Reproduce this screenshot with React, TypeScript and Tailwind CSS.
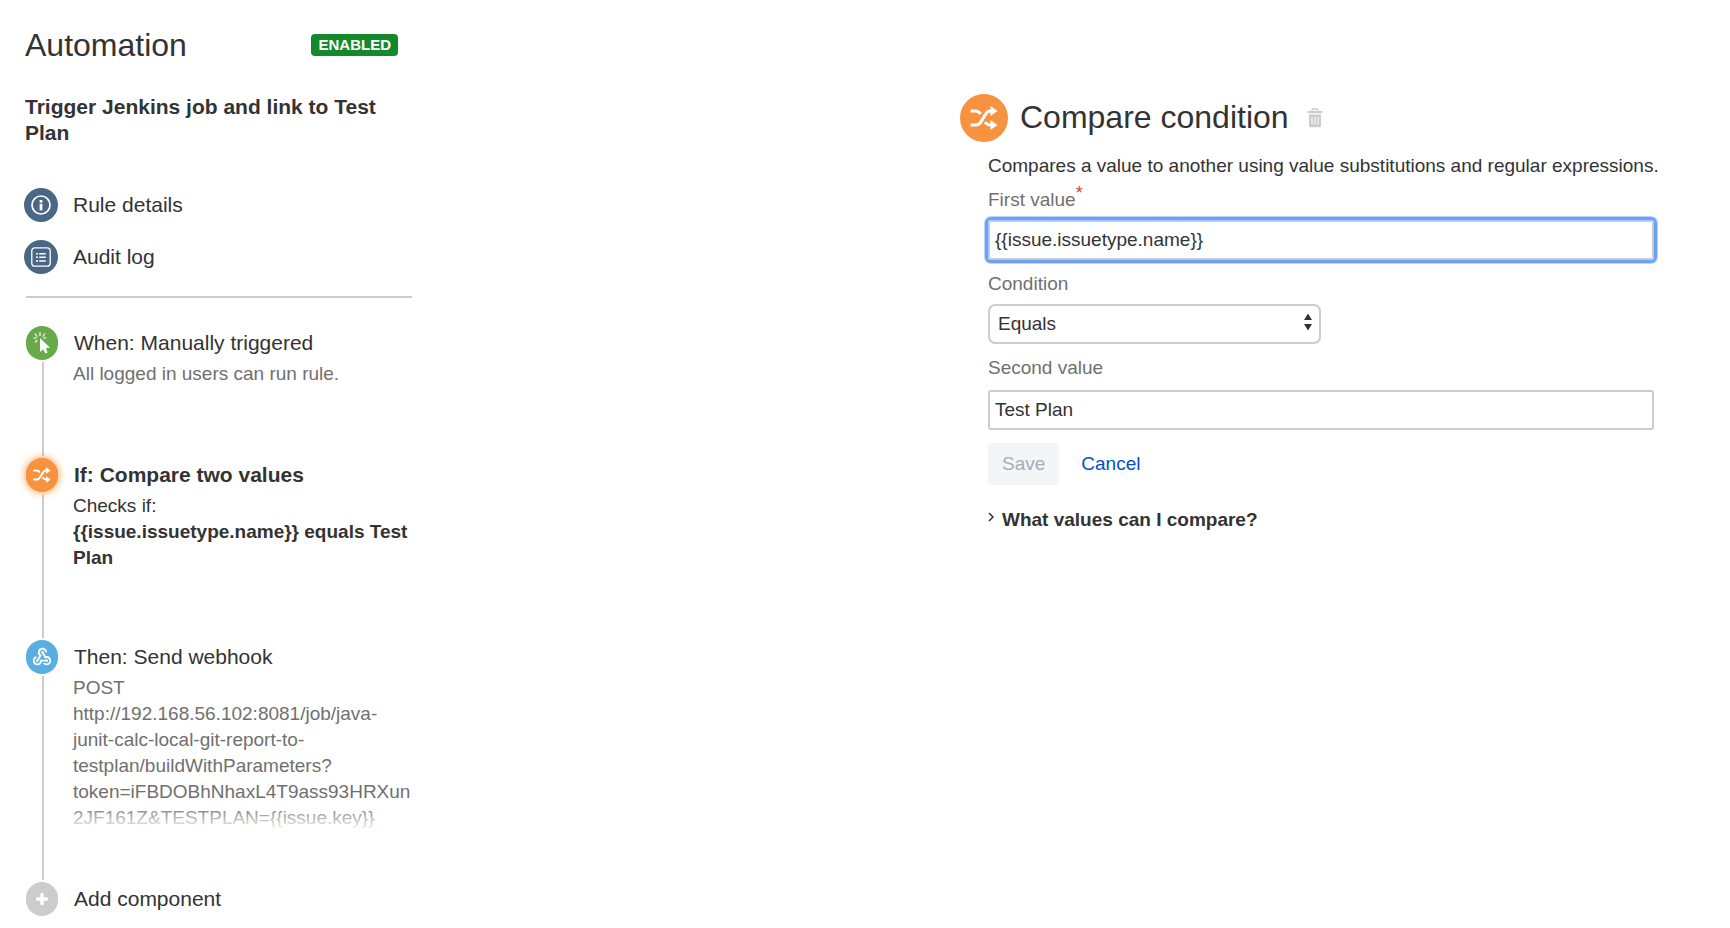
import { useState } from "react";
import type { ReactNode } from "react";
import { MdWebhook } from "react-icons/md";

const InfoIcon = () => (
  <svg viewBox="0 0 34 34" className="w-[34px] h-[34px]" aria-hidden="true">
    <circle cx="17" cy="17" r="17" fill="#4a6785" />
    <circle cx="17" cy="17" r="9" fill="none" stroke="#fff" strokeWidth="1.7" />
    <rect x="15.6" y="12" width="2.8" height="2.6" fill="#fff" />
    <rect x="15.6" y="15.8" width="2.8" height="6.6" fill="#fff" />
  </svg>
);

const LogIcon = () => (
  <svg viewBox="0 0 34 34" className="w-[34px] h-[34px]" aria-hidden="true">
    <circle cx="17" cy="17" r="17" fill="#4a6785" />
    <rect x="7.8" y="7.8" width="18.4" height="18.4" rx="3" fill="none" stroke="#fff" strokeWidth="1.3" />
    <path
      d="M12 13.7h2M15.2 13.7h6.6M12 17.3h2M15.2 17.3h6.6M12 21h2M15.2 21h6.6"
      stroke="#fff"
      strokeWidth="1.5"
    />
  </svg>
);

const ShuffleIcon = ({ className }: { className: string }) => (
  <svg viewBox="0 0 28 24" className={className} aria-hidden="true">
    <path
      d="M0.5 5H5.5c2.400 0 3.800 1 5 3M0.500 19H6c2.800 0 4-1.500 5.500-4l3.500-6c1.500-2.600 2.700-4 5-4h2M15.200 16C16.400 18 17.600 19 20 19h2"
      fill="none"
      stroke="#fff"
      strokeWidth="3.200"
    />
    <path d="M20.500 0L27.500 5l-7 5zM20.500 14L27.500 19l-7 5z" fill="#fff" />
  </svg>
);

const ClickIcon = () => (
  <svg viewBox="0 0 32 34" className="w-8 h-[34px]" aria-hidden="true">
    <path d="M14 12V26l3.200-2.800 2.100 4.400 2.400-1.200-2-4.100 4.300-.5z" fill="#fff" />
    <path
      d="M14 6v4M9 7.500l2.200 3.200M19 7.500l-2.200 3.200M7.500 12h3.200M17.200 12h3.300M9 16.300l2.200-2"
      stroke="#fff"
      strokeWidth="1.200"
      fill="none"
    />
  </svg>
);

const PlusIcon = () => (
  <svg viewBox="0 0 32 34" className="w-8 h-[34px]" aria-hidden="true">
    <path d="M16 12.500v9M11.500 17h9" stroke="#fff" strokeWidth="3.400" strokeLinecap="round" />
  </svg>
);

const TrashIcon = () => (
  <svg viewBox="0 0 16 20" className="w-4 h-5" aria-hidden="true">
    <path d="M5 3V2a1 1 0 0 1 1-1h4a1 1 0 0 1 1 1v1" fill="none" stroke="#ccc" strokeWidth="1.300" />
    <rect x="0.500" y="3" width="15" height="2.200" rx="0.600" fill="#ccc" />
    <path d="M2 6.500h12V17.500a1.800 1.800 0 0 1-1.800 1.800H3.800A1.800 1.800 0 0 1 2 17.500z" fill="#ccc" />
    <path d="M5 9v7.500M8 9v7.500M11 9v7.500" stroke="#fff" strokeWidth="1" />
  </svg>
);

type StepProps = {
  icon: ReactNode;
  color: string;
  title: string;
  selected?: boolean;
  last?: boolean;
  spacing?: string;
  children?: ReactNode;
};

const Step = ({ icon, color, title, selected, last, spacing = "", children }: StepProps) => (
  <li className="flex gap-[15px]">
    <div className="flex flex-col items-center w-8 shrink-0">
      <span
        className={`w-8 h-[34px] rounded-[16px] shrink-0 flex items-center justify-center ${color} ${
          selected ? "shadow-[0_0_8px_#f79232]" : ""
        }`}
      >
        {icon}
      </span>
      {!last && <span className="w-0.5 flex-1 my-0.5 ml-0.5 bg-[#ccc]" />}
    </div>
    <div className={`flex-1 min-w-0 ${spacing}`}>
      <button
        type="button"
        className={`block pl-px text-left text-[21px] leading-[34px] ${selected ? "font-bold" : ""}`}
      >
        {title}
      </button>
      {children}
    </div>
  </li>
);

const App = () => {
  const [firstValue, setFirstValue] = useState("{{issue.issuetype.name}}");
  const [secondValue, setSecondValue] = useState("Test Plan");
  const [condition, setCondition] = useState("Equals");

  return (
    <div className="flex bg-white pl-6 pr-[76px] text-[#333] text-[19px] leading-[26px] font-['Liberation_Sans',Arial,sans-serif]">
      {/* Rule sidebar */}
      <aside className="w-[388px] shrink-0 pt-6">
        <div className="flex items-center justify-between pl-px pr-[14px]">
          <h1 className="text-[32px] leading-[42px]">Automation</h1>
          <span className="rounded-[4px] bg-[#14892c] px-[7px] text-[15px] leading-[22px] font-bold text-white">
            ENABLED
          </span>
        </div>
        <h2 className="mt-7 pl-px text-[21px] leading-[26px] font-bold">
          Trigger Jenkins job and link to Test Plan
        </h2>

        <nav className="mt-[42px] flex flex-col gap-[18px] text-[21px] leading-[34px]">
          <a href="#details" className="flex items-center gap-[15px]">
            <InfoIcon />
            Rule details
          </a>
          <a href="#audit" className="flex items-center gap-[15px]">
            <LogIcon />
            Audit log
          </a>
        </nav>

        <hr className="mt-[22px] ml-0.5 border-0 h-0.5 bg-[#ccc]" />

        <ol className="mt-7 pl-0.5">
          <Step icon={<ClickIcon />} color="bg-[#67ab49]" title="When: Manually triggered" spacing="pb-[71px]">
            <p className="mt-px text-[#707070]">All logged in users can run rule.</p>
          </Step>
          <Step
            icon={<ShuffleIcon className="w-[18px] h-4" />}
            color="bg-[#f79240]"
            title="If: Compare two values"
            selected
            spacing="pb-[69px]"
          >
            <p className="mt-px">Checks if:</p>
            <p className="font-bold">{"{{issue.issuetype.name}} equals Test Plan"}</p>
          </Step>
          <Step
            icon={<MdWebhook className="w-[22px] h-[22px] text-white" />}
            color="bg-[#59afe1]"
            title="Then: Send webhook"
            spacing="pb-[51px]"
          >
            <div className="relative mt-px text-[#707070]">
              <p>POST</p>
              <p className="break-words">
                {"http://192.168.56.102:8081/job/java-junit-calc-local-git-report-to-testplan/buildWithParameters?token=iFBDOBhNhaxL4T9ass93HRXun2JF161Z&TESTPLAN={{issue.key}}"}
              </p>
              <div className="absolute inset-x-0 bottom-0 h-[26px] bg-gradient-to-b from-white/0 to-white" />
            </div>
          </Step>
          <Step icon={<PlusIcon />} color="bg-[#ccc]" title="Add component" last />
        </ol>
      </aside>

      {/* Component config */}
      <main className="flex-1 flex justify-end pt-[94px]">
        <section className="w-full max-w-[694px]">
          <div className="flex items-center">
            <span className="w-12 h-12 rounded-full bg-[#f79240] flex items-center justify-center shrink-0">
              <ShuffleIcon className="w-7 h-6" />
            </span>
            <h2 className="ml-3 pb-0.5 text-[32px] leading-[46px]">Compare condition</h2>
            <button type="button" aria-label="Delete" className="ml-[18px]">
              <TrashIcon />
            </button>
          </div>

          <form className="pl-7" onSubmit={(e) => e.preventDefault()}>
            <p className="mt-[11px] whitespace-nowrap">
              Compares a value to another using value substitutions and regular expressions.
            </p>
            <label htmlFor="first" className="mt-2 block text-[#707070]">
              First value<sup className="static align-super text-[18px] text-[#d04437]">*</sup>
            </label>
            <input
              id="first"
              type="text"
              value={firstValue}
              onChange={(e) => setFirstValue(e.target.value)}
              className="mt-[7px] block w-full h-10 rounded-[3px] border border-[#a9c9fb] px-1.5 outline-none shadow-[inset_0_0_0_1px_#ccc,0_0_0_3px_#6aa2f7,0_0_0_4px_#bdd6fc]"
            />
            <label htmlFor="condition" className="mt-[11px] block text-[#707070]">
              Condition
            </label>
            <div className="relative mt-[7px] w-1/2">
              <select
                id="condition"
                value={condition}
                onChange={(e) => setCondition(e.target.value)}
                className="appearance-none block w-full h-10 rounded-[7px] border-2 border-[#ccc] bg-white px-2"
              >
                <option>Equals</option>
                <option>Does not equal</option>
                <option>Contains</option>
              </select>
              <svg
                viewBox="0 0 10 18"
                className="pointer-events-none absolute right-2 top-[9px] w-[10px] h-[18px]"
                aria-hidden="true"
              >
                <path d="M5 0.500L9 7H1zM5 17.500L9 11H1z" fill="#333" />
              </svg>
            </div>
            <label htmlFor="second" className="mt-[11px] block text-[#707070]">
              Second value
            </label>
            <input
              id="second"
              type="text"
              value={secondValue}
              onChange={(e) => setSecondValue(e.target.value)}
              className="mt-[9px] block w-full h-10 rounded-[3px] border-2 border-[#ccc] px-[5px] outline-none"
            />
            <div className="mt-[13px] flex items-center gap-[22px]">
              <button type="submit" disabled className="h-[42px] rounded-[4px] bg-[#f4f5f7] px-[14px] text-[#a5adba]">
                Save
              </button>
              <button type="button" className="text-[#0052cc]">
                Cancel
              </button>
            </div>
            <button type="button" className="mt-[22px] flex items-center gap-2 font-bold">
              <svg viewBox="0 0 6 10" className="w-1.5 h-[10px] mb-1.5" aria-hidden="true">
                <path d="M1 1l4 4-4 4" fill="none" stroke="#333" strokeWidth="1.500" />
              </svg>
              What values can I compare?
            </button>
          </form>
        </section>
      </main>
    </div>
  );
};

export default App;
